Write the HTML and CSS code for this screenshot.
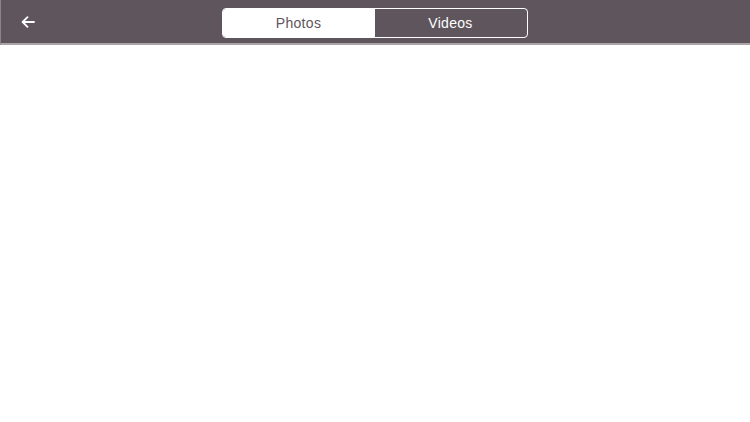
FILE: index.html
```html
<!DOCTYPE html>
<html>
<head>
<meta charset="utf-8">
<link rel="stylesheet" href="styles.css">
</head>
<body>
<header class="bar">
  <button class="back" aria-label="Back">
    <svg width="14" height="12" viewBox="0 0 14 12"><path d="M13 6H1.8M6.5 1.2L1.6 6l4.9 4.8" fill="none" stroke="#fff" stroke-width="1.8" stroke-linecap="round" stroke-linejoin="round"/></svg>
  </button>
  <div class="seg">
    <div class="seg-item active">Photos</div>
    <div class="seg-item">Videos</div>
  </div>
</header>
<main class="content"></main>
</body>
</html>
```
FILE: styles.css
```css
html, body { margin: 0; padding: 0; background: #fff; }
body { width: 750px; height: 422px; overflow: hidden; font-family: "Liberation Sans", Arial, sans-serif; }
.bar {
  height: 43px;
  background: #5e565c;
  border-bottom: 2px solid #a9a4a8;
  border-left: 1px solid #8a8388;
  box-sizing: content-box;
  display: flex;
  align-items: flex-start;
  justify-content: center;
  padding-top: 0;
  position: relative;
}
.back {
  position: absolute;
  left: 19px;
  top: 15px;
  width: 16px;
  height: 14px;
  padding: 0;
  border: 0;
  background: none;
  display: flex;
  align-items: center;
  justify-content: center;
}
.seg {
  display: flex;
  width: 306px;
  height: 30px;
  margin-left: -2px;
  margin-top: 8px;
  border: 1px solid #fff;
  border-radius: 4px;
  box-sizing: border-box;
  overflow: hidden;
}
.seg-item {
  flex: 1;
  display: flex;
  align-items: center;
  justify-content: center;
  color: #fff;
  font-size: 14px;
  letter-spacing: 0.3px;
}
.seg-item.active { background: #fff; color: #5e565c; }
.content { height: 377px; }
```
